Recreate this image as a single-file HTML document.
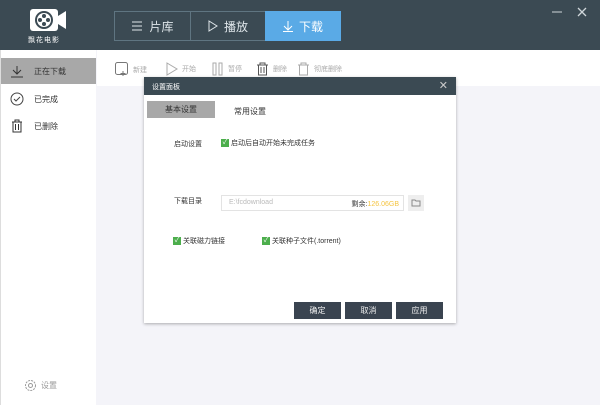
<!DOCTYPE html>
<html><head><meta charset="utf-8"><style>
*{margin:0;padding:0;box-sizing:border-box}
body{width:600px;height:405px;overflow:hidden;background:#f4f4f9;font-family:"Liberation Sans","Noto Sans CJK SC",sans-serif;position:relative;font-size:8px;color:#333}
.a{position:absolute}
#hd{left:0;top:0;width:600px;height:50px;background:#3b4a53}
#side{left:0;top:50px;width:96px;height:355px;background:#fff;border-left:1px solid #ddd}
.nav{top:11px;height:30px;border:1px solid #5f7581;color:#dfe6ea;font-size:12px;display:flex;align-items:center;justify-content:center;gap:6px}
.tb{top:62px;color:#aaa;font-size:7px;display:flex;align-items:center;gap:4px}
.si{left:10px;font-size:8px;color:#333;display:flex;align-items:center;gap:10px}
.cb{display:inline-block;width:8px;height:8px;background:#4cae4c;color:#fff;font-size:7px;line-height:8px;text-align:center;vertical-align:middle;margin-right:2px}
.btn{top:302px;width:47px;height:17px;background:#3a4450;color:#eee;font-size:8px;text-align:center;line-height:17px}
</style></head><body>
<div class="a" id="hd"></div>
<svg class="a" style="left:29px;top:8px" width="38" height="24" viewBox="0 0 38 24"><rect x="1" y="1" width="28" height="22" rx="3" fill="#fff"/><path d="M29 8 L37 3 V21 L29 16Z" fill="#fff"/><circle cx="15" cy="12" r="9" fill="#3b4a53"/><circle cx="15" cy="12" r="7" fill="#fff"/><circle cx="15" cy="8" r="2" fill="#3b4a53"/><circle cx="15" cy="16" r="2" fill="#3b4a53"/><circle cx="11" cy="12" r="2" fill="#3b4a53"/><circle cx="19" cy="12" r="2" fill="#3b4a53"/></svg>
<div class="a" style="left:28px;top:35px;color:#fff;font-size:7px;letter-spacing:1px">飘花电影</div>
<div class="a nav" style="left:114px;width:77px"><svg width="12" height="10"><path d="M1 1H11M1 5H11M1 9H11" stroke="#dfe6ea" stroke-width="1"/></svg>片库</div>
<div class="a nav" style="left:190px;width:76px"><svg width="10" height="12"><path d="M1 1L9 6L1 11Z" stroke="#dfe6ea" fill="none"/></svg>播放</div>
<div class="a nav" style="left:265px;width:76px;background:#5aaae6;border-color:#5aaae6;color:#fff"><svg width="10" height="12"><path d="M5 1V10M1 6L5 10L9 6M0 11.5H10" stroke="#fff" fill="none"/></svg>下载</div>
<svg class="a" style="left:551px;top:6px" width="12" height="12"><path d="M1 6H11" stroke="#cfd6da"/></svg>
<svg class="a" style="left:576px;top:6px" width="12" height="12"><path d="M2 2L10 10M10 2L2 10" stroke="#cfd6da" stroke-width="1.3"/></svg>
<div class="a" id="side"></div>
<div class="a" style="left:1px;top:58px;width:95px;height:26px;background:#a8a8a8"></div>
<div class="a si" style="top:65px"><svg width="14" height="13"><path d="M7 1V9M3 5L7 9L11 5M1 12H13" stroke="#333" fill="none"/></svg><span>正在下载</span></div>
<div class="a si" style="top:92px"><svg width="14" height="14"><circle cx="7" cy="7" r="6" stroke="#444" fill="none"/><path d="M4 7L6 9L10 5" stroke="#444" fill="none"/></svg><span>已完成</span></div>
<div class="a si" style="top:119px"><svg width="14" height="14"><path d="M2 3H12M5 3V1H9V3M3 3V13H11V3M5.5 5V11M8.5 5V11" stroke="#333" fill="none"/></svg><span>已删除</span></div>
<div class="a" style="left:24px;top:379px;color:#999;font-size:8px;display:flex;align-items:center;gap:4px"><svg width="13" height="13"><circle cx="6.5" cy="6.5" r="5" stroke="#999" fill="none" stroke-dasharray="2 1"/><circle cx="6.5" cy="6.5" r="2" stroke="#999" fill="none"/></svg>设置</div>
<div class="a" style="left:97px;top:50px;width:503px;height:36px;background:#fff"></div>
<div class="a tb" style="left:115px"><svg width="14" height="15"><rect x="0.5" y="0.5" width="12" height="12" rx="2" stroke="#777" fill="none"/><path d="M8 9V14M5.5 11.5H10.5" stroke="#777"/></svg>新建</div>
<div class="a tb" style="left:166px"><svg width="12" height="14"><path d="M1 1L11 7L1 13Z" stroke="#aaa" fill="none"/></svg>开始</div>
<div class="a tb" style="left:212px"><svg width="12" height="14"><rect x="1" y="1" width="3" height="12" stroke="#aaa" fill="none"/><rect x="7" y="1" width="3" height="12" stroke="#aaa" fill="none"/></svg>暂停</div>
<div class="a tb" style="left:256px"><svg width="13" height="14"><path d="M1 3H12M4 3V1H9V3M2.5 3V13H10.5V3M5 5V11M8 5V11" stroke="#555" fill="none"/></svg>删除</div>
<div class="a tb" style="left:297px"><svg width="13" height="14"><path d="M1 3H12M4 3V1H9V3M2.5 3V13H10.5V3" stroke="#aaa" fill="none"/></svg>彻底删除</div>
<div class="a" style="left:144px;top:77px;width:312px;height:246px;background:#fff;box-shadow:0 1px 3px rgba(0,0,0,.3)"></div>
<div class="a" style="left:144px;top:77px;width:312px;height:18px;background:#3b4a53;color:#fff;font-size:7px;padding:5px 0 0 8px">设置面板<span style="position:absolute;right:8px;top:2px;font-size:11px;color:#ccc">✕</span></div>
<div class="a" style="left:147px;top:101px;width:68px;height:17px;background:#a8a8a8;font-size:8px;text-align:center;line-height:17px">基本设置</div>
<div class="a" style="left:234px;top:106px;font-size:8px">常用设置</div>
<div class="a" style="left:174px;top:139px;font-size:7px">启动设置</div>
<div class="a" style="left:221px;top:138px;font-size:7px"><span class="cb">✓</span>启动后自动开始未完成任务</div>
<div class="a" style="left:174px;top:196px;font-size:7px">下载目录</div>
<div class="a" style="left:221px;top:195px;width:183px;height:16px;border:1px solid #e3e3e3;font-size:7px;color:#bbb;padding:3px 0 0 7px">E:\fcdownload<span style="position:absolute;right:4px;top:3px;color:#333">剩余:<span style="color:#f5c542">126.06GB</span></span></div>
<div class="a" style="left:408px;top:195px;width:16px;height:16px;background:#eee"><svg width="16" height="16"><path d="M4 5H7L8 6H12V11H4Z" stroke="#888" fill="none"/></svg></div>
<div class="a" style="left:173px;top:236px;font-size:7px"><span class="cb">✓</span>关联磁力链接</div>
<div class="a" style="left:262px;top:236px;font-size:7px"><span class="cb">✓</span>关联种子文件(.torrent)</div>
<div class="a btn" style="left:294px">确定</div>
<div class="a btn" style="left:345px">取消</div>
<div class="a btn" style="left:396px">应用</div>
</body></html>
